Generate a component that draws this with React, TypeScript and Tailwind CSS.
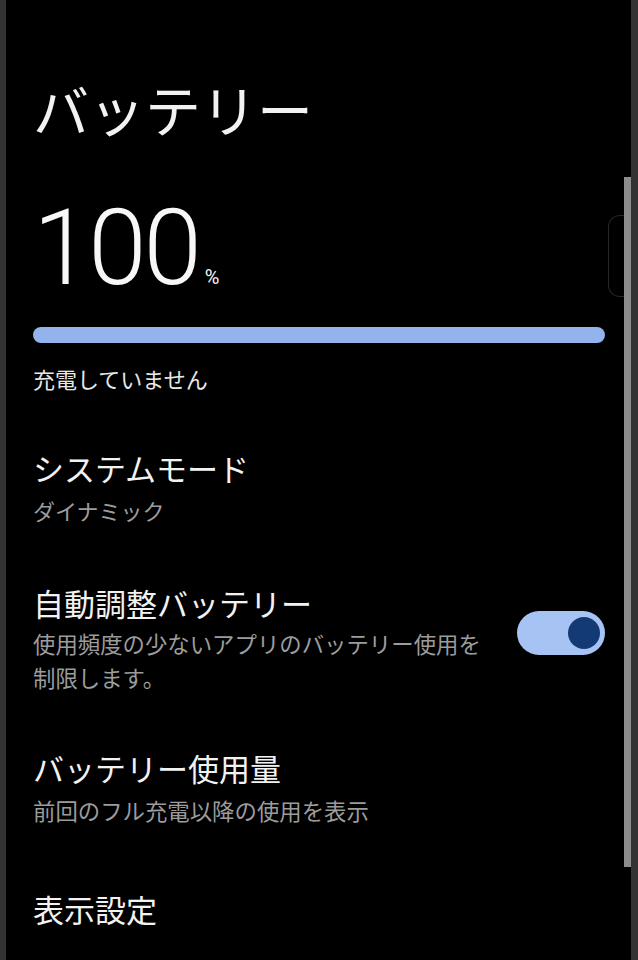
import React from "react";

function Toggle({ on }: { on: boolean }) {
  return (
    <div
      className={`flex h-[44px] w-[88px] shrink-0 items-center rounded-full px-[5px] ${
        on ? "justify-end bg-[#a6c3f3]" : "justify-start bg-[#3a3a3a]"
      }`}
    >
      <div className="h-[32px] w-[32px] rounded-full bg-[#133a75]" />
    </div>
  );
}

function SettingRow({ title, sub, className = "" }: { title: string; sub?: string; className?: string }) {
  return (
    <div className={className}>
      <div className="text-[31px] leading-[31px] text-[#f2f2f2]">{title}</div>
      {sub && <div className="mt-[16px] text-[22px] leading-[22px] text-[#9c9c9c]">{sub}</div>}
    </div>
  );
}

export default function App() {
  return (
    <div className="relative flex h-[960px] w-full overflow-hidden bg-black font-['Noto_Sans_CJK_JP',sans-serif]">
      {/* device frame, left */}
      <div className="w-[6px] shrink-0 bg-[#333333]" />

      <div className="flex-1 pl-[27px] pr-[26px] pt-[80px]">
        <h1 className="text-[56px] leading-[56px] text-[#f2f2f2]">バッテリー</h1>

        <div className="mt-[60px] flex items-baseline font-['Roboto',sans-serif] text-[#f7f7f7]">
          <span className="text-[105px] font-light leading-[105px] tracking-[-3px]">100</span>
          <span className="ml-[6px] text-[20px] leading-[20px]">%</span>
        </div>

        <div className="mt-[26px] h-[16px] w-full rounded-full bg-[#92b3ec]" />

        <div className="mt-[24px] text-[22px] leading-[22px] text-[#e8e8e8]">充電していません</div>

        <SettingRow className="mt-[63px]" title="システムモード" sub="ダイナミック" />

        <div className="mt-[66px] flex items-start justify-between">
          <div className="w-[455px]">
            <div className="text-[31px] leading-[31px] text-[#f2f2f2]">自動調整バッテリー</div>
            <p className="mt-[8px] text-[22.4px] leading-[34px] text-[#9c9c9c]">
              使用頻度の少ないアプリのバッテリー使用を制限します。
            </p>
          </div>
          <div className="mt-[24px]">
            <Toggle on />
          </div>
        </div>

        <div className="mt-[58px]">
          <div className="text-[31px] leading-[31px] text-[#f2f2f2]">バッテリー使用量</div>
          <div className="mt-[16px] text-[22.4px] leading-[22px] text-[#9c9c9c]">前回のフル充電以降の使用を表示</div>
        </div>

        <div className="mt-[72px] text-[31px] leading-[31px] text-[#f2f2f2]">表示設定</div>
      </div>

      {/* scroll thumb + right frame */}
      <div className="w-[7px] shrink-0 bg-[#333333]" />
      <div className="absolute right-[7px] top-[177px] h-[690px] w-[7px] bg-[#8c8c8c]" />
      <div className="absolute right-[14px] top-[215px] h-[82px] w-[16px] rounded-l-[12px] border border-r-0 border-[#262626]" />
    </div>
  );
}
